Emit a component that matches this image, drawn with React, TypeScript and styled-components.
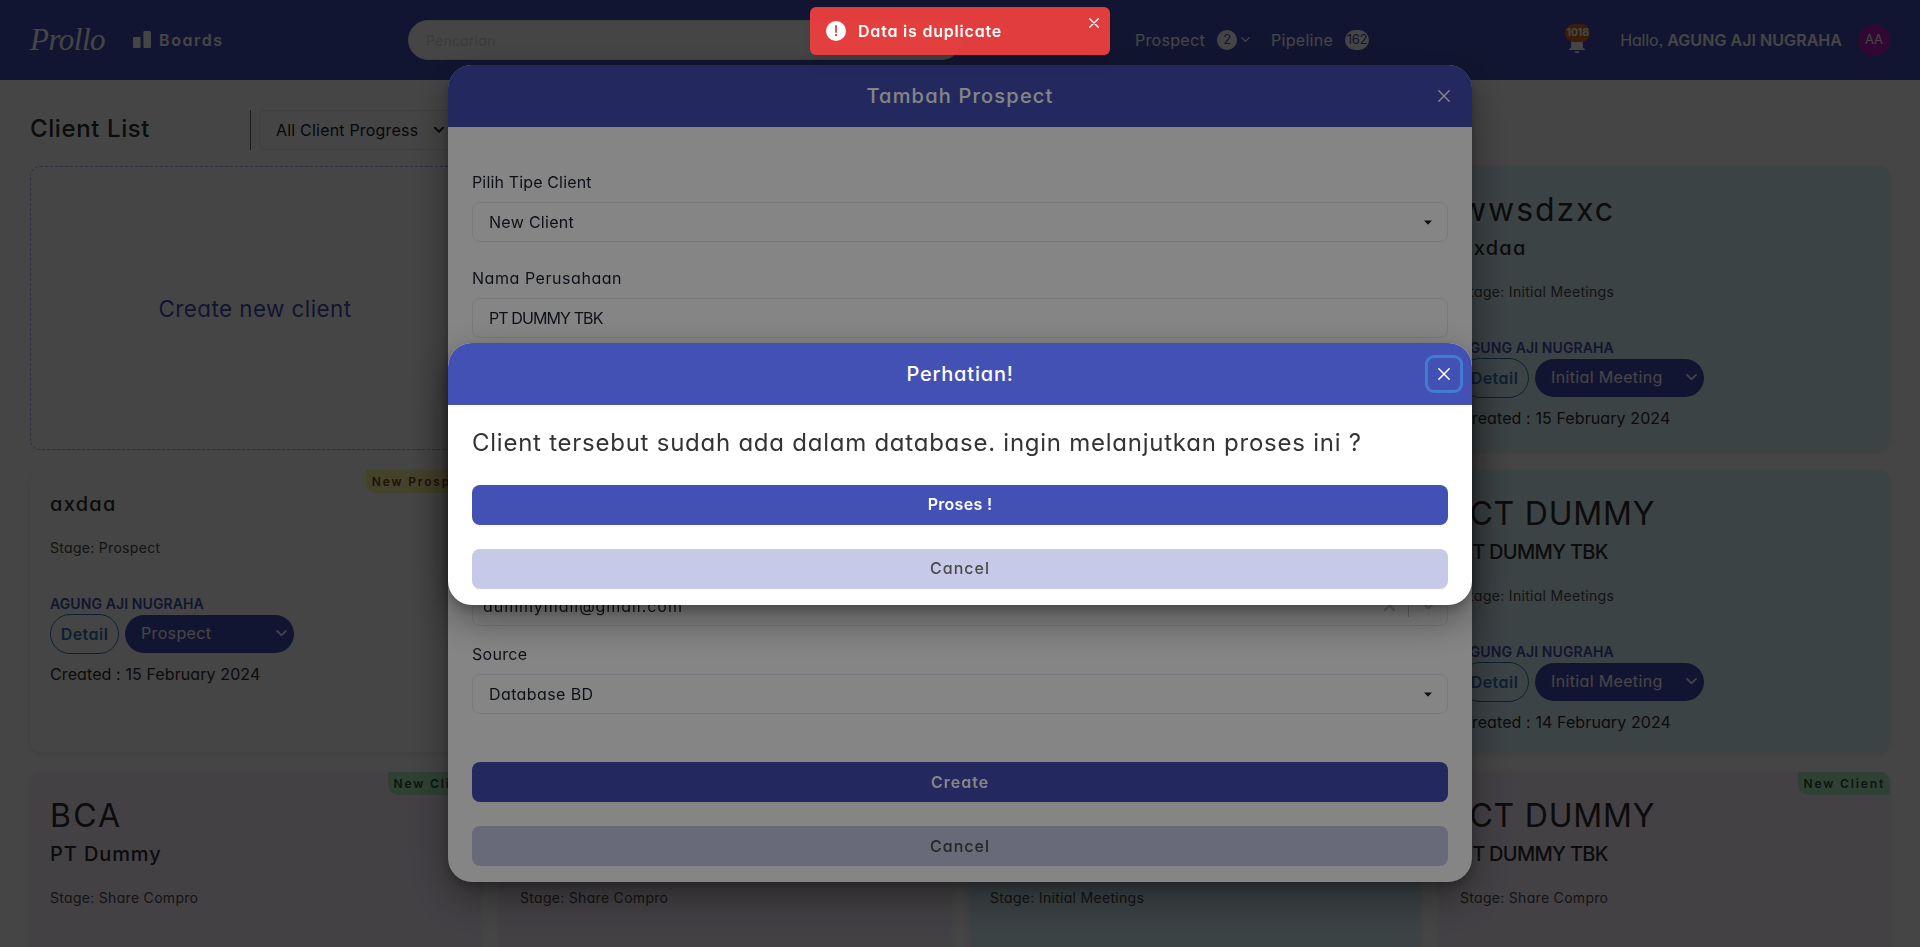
import React from "react";
import styled, { createGlobalStyle, css } from "styled-components";

const INDIGO = "#4350b4";
const FONT = `Inter, "Open Sans", "Liberation Sans", sans-serif`;

const GlobalStyle = createGlobalStyle`
  *, *::before, *::after { box-sizing: border-box; }
  html, body { margin: 0; height: 100%; overflow: hidden; background: #fff; }
  body {
    font-family: ${FONT};
    font-feature-settings: "cv11", "ss03";
    font-size: 16px;
    line-height: 1.5;
    color: #1a202c;
  }
  button, input { font: inherit; font-feature-settings: inherit; letter-spacing: inherit; }
  p, h1, h2, h3 { margin: 0; font-weight: 400; }
`;

const Page = styled.div`
  height: 947px;
  overflow: hidden;
`;

/* ---------- top bar ---------- */

const TopBar = styled.header`
  display: flex;
  align-items: center;
  height: 80px;
  padding: 0 30px;
  background: ${INDIGO};
  color: #fff;
`;

const Logo = styled.div`
  width: 103px;
  font-family: "Liberation Serif", serif;
  font-style: italic;
  font-size: 31px;
  line-height: 40px;
  letter-spacing: -0.5px;
`;

const BoardsLink = styled.div`
  display: flex;
  align-items: center;
  gap: 8px;
  width: 275px;
  font-weight: 600;
  letter-spacing: 1.6px;
`;

const SearchBox = styled.div`
  display: flex;
  align-items: center;
  justify-content: space-between;
  width: 554px;
  height: 40px;
  padding: 0 17px;
  border: 1px solid #e2e8f0;
  border-radius: 20px;
  background: #fff;
  color: #d5dade;
  font-size: 14px;
  letter-spacing: 0.2px;
`;

const Nav = styled.nav`
  display: flex;
  align-items: center;
  margin-left: 173px;
  letter-spacing: 0.3px;
`;

const NavLabel = styled.span<{ $width: number }>`
  width: ${(p) => p.$width}px;
`;

const CountBadge = styled.span<{ $width: number }>`
  display: flex;
  align-items: center;
  justify-content: center;
  width: ${(p) => p.$width}px;
  height: 20px;
  border-radius: 10px;
  background: #fff;
  color: ${INDIGO};
  font-size: 13px;
  letter-spacing: -0.3px;
`;

const NavCaret = styled.span`
  display: flex;
  width: 34px;
  padding-left: 4px;
`;

const Account = styled.div`
  display: flex;
  align-items: center;
  margin-left: auto;
`;

const Notifications = styled.div`
  position: relative;
  display: flex;
  width: 24px;
  height: 32px;
  align-items: flex-end;
  justify-content: center;
  margin-right: 31px;
`;

const NotificationCount = styled.span`
  position: absolute;
  top: 0;
  left: 0;
  width: 25px;
  height: 18px;
  border-radius: 9px;
  background: #dd6b20;
  font-size: 10.5px;
  font-weight: 700;
  line-height: 18px;
  letter-spacing: -0.2px;
  text-align: center;
`;

const Greeting = styled.p`
  letter-spacing: -0.15px;
  b { font-weight: 600; letter-spacing: 0.05px; }
`;

const Avatar = styled.div`
  display: flex;
  align-items: center;
  justify-content: center;
  width: 32px;
  height: 32px;
  margin-left: 16px;
  border-radius: 50%;
  background: #b51fb8;
  font-size: 12.8px;
`;

/* ---------- board ---------- */

const Board = styled.main`
  padding: 30px 30px 0;
`;

const BoardHead = styled.div`
  display: flex;
  align-items: center;
  height: 40px;
`;

const BoardTitle = styled.h1`
  width: 220px;
  padding-bottom: 2px;
  font-size: 24px;
  font-weight: 500;
  letter-spacing: 0.6px;
  color: #2d2d2d;
`;

const ProgressFilter = styled.div`
  border-left: 1px solid #666;
  padding-left: 8px;
`;

const FilterSelect = styled.div`
  display: flex;
  align-items: center;
  justify-content: space-between;
  width: 200px;
  height: 40px;
  padding: 0 14px 0 16px;
  border: 1px solid #e2e8f0;
  border-radius: 6px;
  letter-spacing: 0.2px;
`;

const CardGrid = styled.div`
  display: grid;
  grid-template-columns: repeat(4, 1fr);
  grid-template-rows: 284px 282px 283px;
  gap: 20px;
  margin-top: 16px;
`;

const NewClientTile = styled.button`
  padding-top: 2px;
  border: 1px dashed #a9aee0;
  border-radius: 10px;
  background: transparent;
  color: ${INDIGO};
  font-size: 22.4px;
  letter-spacing: 0.45px;
`;

type Tone = "white" | "blue" | "lilac";
const toneColor: Record<Tone, string> = {
  white: "#ffffff",
  blue: "#def7ff",
  lilac: "#faf0ff",
};

const Card = styled.article<{ $tone: Tone }>`
  position: relative;
  padding: 19.5px 20px;
  border-radius: 10px;
  background: ${(p) => toneColor[p.$tone]};
  box-shadow: 0 2px 6px rgba(0, 0, 0, 0.1);
`;

const Ribbon = styled.span<{ $kind: "client" | "prospect" }>`
  position: absolute;
  top: 0;
  right: 0;
  height: 23px;
  padding: 0 5px 0 6px;
  border-radius: 0 10px 0 10px;
  font-size: 12px;
  font-weight: 600;
  line-height: 23px;
  letter-spacing: 1.85px;
  ${(p) =>
    p.$kind === "client"
      ? css`
          background: #b4edc3;
          color: #22543d;
        `
      : css`
          background: #fbf3a0;
          color: #744210;
        `}
`;

const CardCode = styled.h2<{ $track: number }>`
  font-size: 32px;
  line-height: 48px;
  letter-spacing: ${(p) => p.$track}px;
  color: #2d2d2d;
`;

const CardName = styled.h3<{ $track: number }>`
  font-size: 20px;
  line-height: 29px;
  font-weight: 500;
  letter-spacing: ${(p) => p.$track}px;
  color: #2d2d2d;
`;

const CardStage = styled.p`
  margin: 18px 0 35px;
  font-size: 14px;
  line-height: 21px;
  letter-spacing: 0.3px;
  color: #4a4a4a;
`;

const CardOwner = styled.p`
  font-size: 14px;
  line-height: 21px;
  font-weight: 600;
  letter-spacing: 0.1px;
  color: ${INDIGO};
`;

const CardActions = styled.div`
  display: flex;
  align-items: center;
  gap: 6px;
`;

const DetailButton = styled.button`
  width: 69px;
  height: 40px;
  padding: 0;
  border: 1px solid #2c78bf;
  border-radius: 20px;
  background: transparent;
  color: #2c78bf;
  font-weight: 600;
  letter-spacing: 0.45px;
`;

const StageSelect = styled.div`
  display: flex;
  align-items: center;
  justify-content: space-between;
  width: 169px;
  height: 38px;
  padding: 0 7px 1px 16px;
  border-radius: 19px;
  background: ${INDIGO};
  color: #fff;
  letter-spacing: 0.35px;
`;

const CardCreated = styled.p`
  margin-top: 8px;
  letter-spacing: 0.1px;
  color: #2d2d2d;
`;

/* ---------- dialogs ---------- */

const Overlay = styled.div`
  position: fixed;
  inset: 0;
  display: flex;
  align-items: center;
  justify-content: center;
  background: rgba(0, 0, 0, 0.48);
`;

const Dialog = styled.section`
  width: 1024px;
  border-radius: 24px;
  overflow: hidden;
  background: #fff;
  box-shadow: 0 5px 10px rgba(0, 0, 0, 0.2), 0 15px 40px rgba(0, 0, 0, 0.4);
`;

const DialogHead = styled.header<{ $track: number }>`
  position: relative;
  height: 62px;
  background: ${INDIGO};
  color: #fff;
  font-size: 20px;
  font-weight: 500;
  line-height: 62px;
  letter-spacing: ${(p) => p.$track}px;
  text-align: center;
`;

const CloseButton = styled.button<{ $focused?: boolean }>`
  position: absolute;
  top: 15px;
  right: 12px;
  display: flex;
  align-items: center;
  justify-content: center;
  width: 32px;
  height: 32px;
  padding: 0;
  border: 0;
  border-radius: 6px;
  background: transparent;
  color: inherit;
  box-shadow: ${(p) => (p.$focused ? "0 0 0 3px rgba(66, 153, 225, 0.6)" : "none")};
`;

const DialogBody = styled.div<{ $top: number }>`
  padding: ${(p) => p.$top}px 24px 16px;
`;

const Message = styled.p`
  margin-bottom: 24px;
  font-size: 24px;
  line-height: 36px;
  letter-spacing: 0.75px;
  color: #333;
`;

const Field = styled.div<{ $before?: number }>`
  margin-top: ${(p) => p.$before ?? 0}px;
`;

const Label = styled.label<{ $track?: number }>`
  display: block;
  margin-bottom: 8px;
  letter-spacing: ${(p) => p.$track ?? 0.15}px;
`;

const Control = styled.div<{ $pad?: number; $track?: number }>`
  display: flex;
  align-items: center;
  justify-content: space-between;
  height: 40px;
  padding: 0 12px 1px ${(p) => p.$pad ?? 16}px;
  border: 1px solid #e2e8f0;
  border-radius: 8px;
  letter-spacing: ${(p) => p.$track ?? 0.3}px;
`;

const Indicators = styled.div`
  display: flex;
  align-items: center;
  gap: 13px;
  color: #ccc;
`;

const Divider = styled.span`
  width: 1px;
  height: 22px;
  background: #ccc;
`;

const Actions = styled.div<{ $before?: number }>`
  display: grid;
  gap: 24px;
  margin-top: ${(p) => p.$before ?? 0}px;
`;

const ActionButton = styled.button<{ $primary?: boolean; $track?: number }>`
  height: 40px;
  padding: 0 0 1px;
  border: 0;
  border-radius: 8px;
  background: ${(p) => (p.$primary ? INDIGO : "#c7c9e8")};
  color: ${(p) => (p.$primary ? "#fff" : "#4a4a4a")};
  font-weight: ${(p) => (p.$primary ? 600 : 500)};
  letter-spacing: ${(p) => p.$track ?? 1}px;
`;

/* ---------- toast ---------- */

const ToastLayer = styled.div`
  position: fixed;
  top: 7px;
  left: 0;
  right: 0;
  display: flex;
  justify-content: center;
`;

const Toast = styled.div`
  display: flex;
  align-items: flex-start;
  width: 300px;
  height: 48px;
  padding: 12px 11px 12px 16px;
  border-radius: 6px;
  background: rgba(229, 62, 62, 0.98);
  color: #fff;
  font-weight: 600;
  letter-spacing: 0.8px;
  box-shadow: 0 10px 15px -3px rgba(0, 0, 0, 0.1), 0 4px 6px -2px rgba(0, 0, 0, 0.05);
  svg:first-child { margin: 2px 12px 0 0; }
  svg:last-child { margin: -1px 0 0 auto; }
`;

/* ---------- icons ---------- */

const Chevron = ({ w = 10, stroke = 2 }: { w?: number; stroke?: number }) => (
  <svg width={w} height={w * 0.6} viewBox="0 0 10 6" fill="none" stroke="currentColor" strokeWidth={stroke}>
    <path d="M1 0.8 5 4.8 9 0.8" strokeLinecap="round" strokeLinejoin="round" />
  </svg>
);

const Cross = ({ size = 12, stroke = 1.5 }: { size?: number; stroke?: number }) => (
  <svg width={size} height={size} viewBox="0 0 12 12" fill="none" stroke="currentColor" strokeWidth={stroke}>
    <path d="M0.8 0.8 11.2 11.2M11.2 0.8 0.8 11.2" strokeLinecap="round" />
  </svg>
);

const Caret = () => (
  <svg width="14" height="14" viewBox="0 0 14 14">
    <path d="M3 5.5h8L7 9.8z" fill="#1a202c" />
  </svg>
);

const BoardsIcon = () => (
  <svg width="18" height="18" viewBox="0 0 18 18" fill="currentColor">
    <rect x="0" y="6" width="7.6" height="11" rx="1.2" />
    <rect x="10.4" y="0" width="7.6" height="17" rx="1.2" />
  </svg>
);

const SearchIcon = () => (
  <svg width="16" height="16" viewBox="0 0 16 16" fill="none" stroke="#8c8c8c" strokeWidth="1.6">
    <circle cx="6.5" cy="6.5" r="5" />
    <path d="m10.5 10.5 4.5 4.5" />
  </svg>
);

const BellIcon = () => (
  <svg width="16" height="29" viewBox="0 0 16 29" fill="currentColor">
    <path d="M2.2 20.5V11a5.8 5.8 0 0 1 11.6 0v9.5L15.9 22v1H.1v-1z" />
    <path d="M5.6 24.2h4.8a2.4 2 0 0 1-4.8 0z" />
  </svg>
);

const AlertIcon = () => (
  <svg width="20" height="20" viewBox="0 0 20 20">
    <circle cx="10" cy="10" r="10" fill="#fff" />
    <path d="M10 5v6" stroke="#e03e3e" strokeWidth="1.8" strokeLinecap="round" />
    <circle cx="10" cy="14.2" r="1.15" fill="#e03e3e" />
  </svg>
);

/* ---------- data ---------- */

type Client = {
  code?: string;
  codeTrack?: number;
  name: string;
  nameTrack: number;
  stage: string;
  status?: string;
  created?: string;
  tone: Tone;
  ribbon?: "client" | "prospect";
};

const ict = { code: "ICT DUMMY", codeTrack: 0.8, name: "PT DUMMY TBK", nameTrack: -0.7 };

const clients: (Client | null)[] = [
  null,
  null,
  { code: "wwsdzxc", codeTrack: 1.9, name: "axdaa", nameTrack: 1.3, stage: "Initial Meetings", status: "Initial Meeting", created: "15 February 2024", tone: "blue" },
  { name: "axdaa", nameTrack: 1.3, stage: "Prospect", status: "Prospect", created: "15 February 2024", tone: "white", ribbon: "prospect" },
  null,
  null,
  { ...ict, stage: "Initial Meetings", status: "Initial Meeting", created: "14 February 2024", tone: "blue" },
  { code: "BCA", codeTrack: 2.2, name: "PT Dummy", nameTrack: 0.9, stage: "Share Compro", tone: "lilac", ribbon: "client" },
  { ...ict, stage: "Share Compro", tone: "lilac" },
  { ...ict, stage: "Initial Meetings", tone: "blue" },
  { ...ict, stage: "Share Compro", tone: "lilac", ribbon: "client" },
];

const ClientCard = ({ client }: { client: Client }) => (
  <Card $tone={client.tone}>
    {client.ribbon && (
      <Ribbon $kind={client.ribbon}>{client.ribbon === "client" ? "New Client" : "New Prospect"}</Ribbon>
    )}
    {client.code && <CardCode $track={client.codeTrack ?? 0}>{client.code}</CardCode>}
    <CardName $track={client.nameTrack}>{client.name}</CardName>
    <CardStage>Stage: {client.stage}</CardStage>
    {client.status && (
      <>
        <CardOwner>AGUNG AJI NUGRAHA</CardOwner>
        <CardActions>
          <DetailButton>Detail</DetailButton>
          <StageSelect>
            {client.status}
            <Chevron w={11} stroke={1.6} />
          </StageSelect>
        </CardActions>
        <CardCreated>Created : {client.created}</CardCreated>
      </>
    )}
  </Card>
);

export default function App() {
  return (
    <>
      <GlobalStyle />
      <Page>
        <TopBar>
          <Logo>Prollo</Logo>
          <BoardsLink>
            <BoardsIcon />
            Boards
          </BoardsLink>
          <SearchBox>
            Pencarian
            <SearchIcon />
          </SearchBox>
          <Nav>
            <NavLabel $width={82}>Prospect</NavLabel>
            <CountBadge $width={20}>2</CountBadge>
            <NavCaret>
              <Chevron w={9} stroke={1.3} />
            </NavCaret>
            <NavLabel $width={74}>Pipeline</NavLabel>
            <CountBadge $width={24}>162</CountBadge>
          </Nav>
          <Account>
            <Notifications>
              <BellIcon />
              <NotificationCount>1018</NotificationCount>
            </Notifications>
            <Greeting>
              Hallo, <b>AGUNG AJI NUGRAHA</b>
            </Greeting>
            <Avatar>AA</Avatar>
          </Account>
        </TopBar>

        <Board>
          <BoardHead>
            <BoardTitle>Client List</BoardTitle>
            <ProgressFilter>
              <FilterSelect>
                All Client Progress
                <Chevron />
              </FilterSelect>
            </ProgressFilter>
          </BoardHead>
          <CardGrid>
            <NewClientTile>Create new client</NewClientTile>
            {clients.map((client, i) =>
              client ? <ClientCard key={i} client={client} /> : <Card key={i} $tone="blue" />
            )}
          </CardGrid>
        </Board>
      </Page>

      <Overlay>
        <Dialog>
          <DialogHead $track={1.2}>
            Tambah Prospect
            <CloseButton>
              <Cross size={12} />
            </CloseButton>
          </DialogHead>
          <DialogBody $top={43}>
            <Field>
              <Label>Pilih Tipe Client</Label>
              <Control>
                New Client
                <Caret />
              </Control>
            </Field>
            <Field $before={24}>
              <Label $track={0.55}>Nama Perusahaan</Label>
              <Control $track={-0.9}>PT DUMMY TBK</Control>
            </Field>
            <Field $before={248}>
              <Control $pad={10} $track={0.95}>
                dummymail@gmail.com
                <Indicators>
                  <Cross size={11} stroke={2} />
                  <Divider />
                  <Chevron w={13} stroke={1.8} />
                </Indicators>
              </Control>
            </Field>
            <Field $before={16}>
              <Label $track={0.3}>Source</Label>
              <Control $track={0.4}>
                Database BD
                <Caret />
              </Control>
            </Field>
            <Actions $before={48}>
              <ActionButton $primary>Create</ActionButton>
              <ActionButton>Cancel</ActionButton>
            </Actions>
          </DialogBody>
        </Dialog>
      </Overlay>

      <Overlay>
        <Dialog>
          <DialogHead $track={0.8}>
            Perhatian!
            <CloseButton $focused>
              <Cross size={12} />
            </CloseButton>
          </DialogHead>
          <DialogBody $top={20}>
            <Message>Client tersebut sudah ada dalam database. ingin melanjutkan proses ini ?</Message>
            <Actions>
              <ActionButton $primary $track={0.3}>
                Proses !
              </ActionButton>
              <ActionButton>Cancel</ActionButton>
            </Actions>
          </DialogBody>
        </Dialog>
      </Overlay>

      <ToastLayer>
        <Toast>
          <AlertIcon />
          Data is duplicate
          <Cross size={10} stroke={1.6} />
        </Toast>
      </ToastLayer>
    </>
  );
}
